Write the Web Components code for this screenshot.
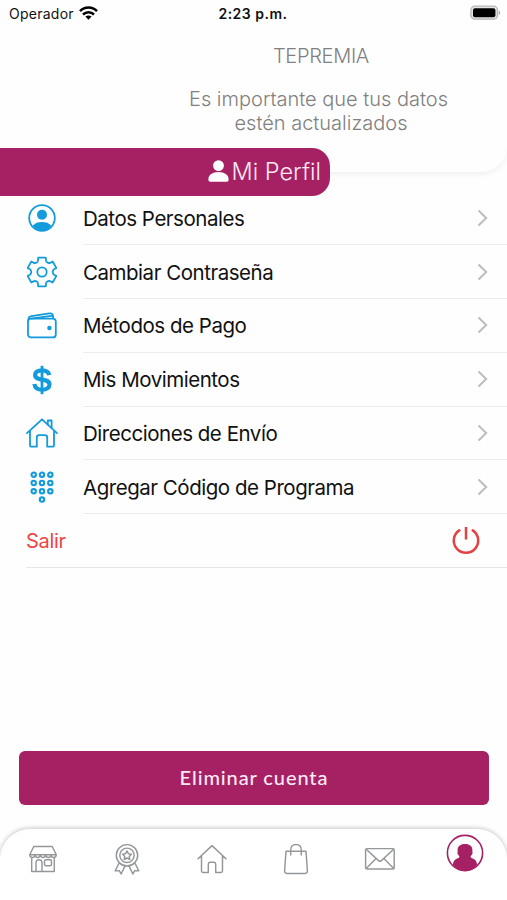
<!DOCTYPE html>
<html lang="es">
<head>
<meta charset="utf-8">
<meta name="viewport" content="width=device-width, initial-scale=1">
<title>Mi Perfil</title>
<style>
	html, body{
		margin:0;
		height:100%;
	}
	body{
		--brand: #a62163;
		--blue: #139bdc;
		background:#fefefe;
		color:#111;
		font-family: Inter, "Liberation Sans", sans-serif;
		overflow:hidden;
	}
</style>
</head>
<body>

<profile-page>
	<status-bar slot="status" carrier="Operador" time="2:23 p.m."></status-bar>
	<profile-header slot="header">
		<span slot="name">TEPREMIA</span>
		<span slot="line1">Es importante que tus datos</span>
		<span slot="line2">estén actualizados</span>
	</profile-header>
	<title-banner slot="banner">Mi Perfil</title-banner>

	<menu-row icon="user">Datos Personales</menu-row>
	<menu-row icon="gear">Cambiar Contraseña</menu-row>
	<menu-row icon="wallet">Métodos de Pago</menu-row>
	<menu-row icon="dollar">Mis Movimientos</menu-row>
	<menu-row icon="house">Direcciones de Envío</menu-row>
	<menu-row icon="keypad">Agregar Código de Programa</menu-row>
	<logout-row>Salir</logout-row>

	<action-button slot="action">Eliminar cuenta</action-button>
	<tab-bar slot="tabs"></tab-bar>
</profile-page>

<script>
const icons = {
	user: `<svg width="28" height="28" viewBox="0 0 28 28"><circle cx="14" cy="14" r="12.8" fill="none" stroke="currentColor" stroke-width="1.8"/><circle cx="14" cy="10.800" r="5" fill="currentColor"/><path d="M4.800 21.800C7 19 10 18 14 18s7 1 9.200 3.800C21 25.300 17.500 27 14 27s-7-1.700-9.200-5.200z" fill="currentColor"/></svg>`,
	gear: `<svg width="32" height="32" viewBox="0 0 32 32" fill="none" stroke="currentColor" stroke-width="1.8" stroke-linejoin="round"><path d="M12.200 1.700h7.600l.2 2.700q.2 1.600 1.600 2.300t3-.1l2-1.100 3.700 6.400-2.200 1.400q-1.400 1-1.400 2.700t1.400 2.700l2.200 1.400-3.700 6.400-2-1.100q-1.600-.8-3-.1t-1.600 2.300l-.2 2.700h-7.600l-.2-2.700q-.2-1.600-1.600-2.300t-3 .1l-2 1.100-3.700-6.400 2.200-1.400q1.400-1 1.400-2.700t-1.400-2.700l-2.200-1.400 3.700-6.400 2 1.100q1.600.8 3 .1T12 4.400z"/><circle cx="16" cy="16" r="4.700"/></svg>`,
	wallet: `<svg width="32" height="30" viewBox="0 0 32 30" fill="none" stroke="currentColor" stroke-width="1.8" stroke-linejoin="round"><rect x="2" y="7.600" width="27.800" height="18.800" rx="3"/><path d="M2.500 9.500c-.3-2.500.8-4 3-4.300L23.500 2.400c2.200-.3 3.300.6 3.500 2.600l.3 2.700M5 7.700l22.200-3"/><circle cx="23.400" cy="17" r="2.200" fill="currentColor" stroke="none"/></svg>`,
	dollar: `<svg width="22" height="30" viewBox="0 0 22 30" fill="none" stroke="currentColor"><path d="M18.200 10.200C17.600 6.700 15 5.300 11 5.300c-4.200 0-6.900 1.700-6.900 4.700 0 6.900 14.400 2.400 14.400 9.500 0 3.300-3 5.200-7.300 5.200-4.600 0-7.300-1.900-7.800-5.700" stroke-width="4.200"/><path d="M11 .8v28.400" stroke-width="2.800"/></svg>`,
	house: `<svg width="34" height="32" viewBox="0 0 34 32" fill="none" stroke="currentColor" stroke-width="1.800" stroke-linejoin="round" stroke-linecap="round"><path d="M2 16.200 17 2.300l15 13.900M5 14v14.400c0 .9.400 1.300 1.300 1.300h5.500V20.500c0-1.600.7-2.400 2.200-2.400h6c1.500 0 2.200.8 2.200 2.400v9.200h5.500c.9 0 1.300-.4 1.300-1.300V14"/><path d="M22.800 7.300V3.500h3.800v7.300"/></svg>`,
	keypad: `<svg width="24" height="32" viewBox="0 0 24 32" fill="none" stroke="currentColor" stroke-width="2.100"><circle cx="3.700" cy="3.700" r="2.200"/><circle cx="12" cy="3.700" r="2.200"/><circle cx="20.300" cy="3.700" r="2.200"/><circle cx="3.700" cy="12" r="2.200"/><circle cx="12" cy="12" r="2.200"/><circle cx="20.300" cy="12" r="2.200"/><circle cx="3.700" cy="20.300" r="2.200"/><circle cx="12" cy="20.300" r="2.200"/><circle cx="20.300" cy="20.300" r="2.200"/><circle cx="12" cy="28.600" r="2.200"/></svg>`,
	store: `<svg width="30" height="28" viewBox="0 0 30 28"><path d="M5.800 1.500h18.400l4.100 8.200H1.700zM1.700 9.700c.2 3.600 5.200 3.600 5.300.3.300 3.300 5 3.300 5.300 0 .3 3.300 5.100 3.300 5.400 0 .3 3.300 5 3.300 5.300 0 .1 3.300 5.100 3.300 5.300-.3M3.700 12.800v13.700h22.600V12.800M8 26.500V18c0-2.200 1-3.200 3-3.200s3 1 3 3.200v8.500"/><rect x="16.500" y="14.700" width="7" height="6" rx="1.500"/></svg>`,
	medal: `<svg width="26" height="32" viewBox="0 0 26 32"><circle cx="13" cy="12.300" r="10.700"/><circle cx="13" cy="12.300" r="7.200"/><path d="m13 7.900 1.400 2.900 3.100.4-2.300 2.200.6 3.100-2.800-1.500-2.800 1.500.6-3.100-2.300-2.200 3.100-.4zM5 20.200l-3.800 7.700 4.100-.2 1.800 3.300 4-8.100M21 20.200l3.800 7.700-4.100-.2-1.800 3.300-4-8.100"/></svg>`,
	home: `<svg width="30" height="30" viewBox="0 0 30 30"><path d="M1 14.800 15 1.600l14 13.200M4.500 11.700V27c0 1 .4 1.400 1.400 1.400h5.400v-8c0-1.500.6-2.200 2-2.200h3.400c1.400 0 2 .7 2 2.200v8h5.400c1 0 1.400-.4 1.400-1.400V11.700"/></svg>`,
	bag: `<svg width="26" height="32" viewBox="0 0 26 32"><path d="M3 8.300h20l1.400 19.400c.1 1.800-1 2.800-2.700 2.800H4.300c-1.700 0-2.800-1-2.700-2.800zM7.700 12V7.300c0-3.700 2.300-5.800 5.300-5.800s5.300 2.100 5.300 5.800V12"/></svg>`,
	mail: `<svg width="32" height="24" viewBox="0 0 32 24"><rect x="1.600" y="1.600" width="28.600" height="20.400" rx="1.500"/><path d="m2.200 2.300 12.300 11.300c1 .9 1.900.9 2.900 0L29.700 2.300M2.200 21.400 12 11.500M29.700 21.400l-9.800-9.900"/></svg>`,
	profile: `<svg width="38" height="38" viewBox="0 0 38 38"><circle cx="19" cy="19" r="17.600" fill="none" stroke="currentColor" stroke-width="1.600"/><path d="M19 9.900c-4.900 0-7.400 2.300-7.400 6.200 0 1 .1 1.500-.1 2.300-.3 1.400.6 2.200 1.500 3.300.7 1 .5 1.900-.6 2.200-3.400.9-5.200 3-5.600 7C10 34.700 14.300 37 19 37s9-2.300 12.200-6.100c-.4-4-2.200-6.100-5.600-7-1.100-.3-1.300-1.200-.6-2.200.9-1.100 1.800-1.900 1.500-3.300-.2-.8-.1-1.300-.1-2.300 0-3.900-2.500-6.200-7.400-6.200z" fill="currentColor"/></svg>`
};

class ProfilePage extends HTMLElement {
	constructor() {
		super();
		this.attachShadow({ mode: 'open' }).innerHTML = `
		<style>
			:host{
				display:flex;
				flex-direction:column;
				height:900px;
				overflow:hidden;
			}
			.rows{
				flex:1;
				margin-top:-4.500px;
			}
		</style>
		<slot name="status"></slot>
		<slot name="header"></slot>
		<slot name="banner"></slot>
		<main class="rows"><slot></slot></main>
		<slot name="action"></slot>
		<slot name="tabs"></slot>`;
	}
}
customElements.define('profile-page', ProfilePage);

class StatusBar extends HTMLElement {
	connectedCallback() {
		this.attachShadow({ mode: 'open' }).innerHTML = `
		<style>
			:host{
				display:grid;
				grid-template-columns:1fr auto 1fr;
				align-items:center;
				height:27px;
				margin-bottom:1px;
				padding:0 6px 0 9px;
				font-size:14px;
				box-sizing:border-box;
			}
			.left{
				display:flex;
				align-items:center;
				gap:5px;
				letter-spacing:.25px;
			}
			.left svg{
				margin-top:-2px;
			}
			b{
				margin-right:4px;
				font-weight:600;
				letter-spacing:.5px;
			}
			.battery{
				justify-self:end;
				margin-top:-1px;
			}
			svg{ display:block; }
		</style>
		<div class="left"><span>${this.getAttribute('carrier')}</span>
			<svg width="19" height="14" viewBox="0 0 19 14" fill="none" stroke="#000" stroke-width="2.500"><path d="M1 5.200c4.800-4.900 12.200-4.900 17 0M4 8.500c3.200-3.100 7.800-3.100 11 0"/><path d="M6.400 10.600c1.800-1.600 4.400-1.600 6.200 0L9.500 13.800z" fill="#000" stroke="none"/></svg>
		</div>
		<b>${this.getAttribute('time')}</b>
		<svg class="battery" width="31" height="16" viewBox="0 0 31 16"><rect x=".9" y="1.200" width="26.600" height="13" rx="4" fill="#e4e4e4" stroke="#b5b5b5" stroke-width="1.300"/><rect x="3" y="3.200" width="22.400" height="9" rx="2" fill="#000"/><path d="M28.800 5.500c1.900.8 1.900 3.700 0 4.500z" fill="#aaa"/></svg>`;
	}
}
customElements.define('status-bar', StatusBar);

class ProfileHeader extends HTMLElement {
	constructor() {
		super();
		this.attachShadow({ mode: 'open' }).innerHTML = `
		<style>
			:host{
				display:flex;
				flex-direction:column;
				align-items:center;
				box-sizing:border-box;
				height:144px;
				flex:none;
				padding:16px 0 0 130px;
				border-radius:0 0 26px 0;
				box-shadow:0 3px 5px rgba(0,0,0,.05);
				color:#808080;
				font-size:20px;
				font-weight:300;
				line-height:24.500px;
				clip-path:inset(0 0 -12px 0);
			}
			.name{
				padding-left:5px;
				margin-bottom:18px;
				letter-spacing:-.3px;
			}
			.text{
				text-align:center;
			}
			.text slot{
				display:block;
			}
			.l2{ padding-left:5px; }
		</style>
		<div class="name"><slot name="name"></slot></div>
		<div class="text"><slot name="line1"></slot><slot class="l2" name="line2"></slot></div>`;
	}
}
customElements.define('profile-header', ProfileHeader);

class TitleBanner extends HTMLElement {
	constructor() {
		super();
		this.attachShadow({ mode: 'open' }).innerHTML = `
		<style>
			:host{
				display:flex;
				align-items:center;
				justify-content:flex-end;
				gap:3px;
				box-sizing:border-box;
				flex:none;
				width:330px;
				height:48px;
				margin-top:-24px;
				padding:0 9px 2px 0;
				border-radius:0 18px 18px 0;
				background:var(--brand);
				color:#fde9f5;
				font-size:23.500px;
				font-weight:300;
				z-index:1;
			}
		</style>
		<svg width="21" height="22" viewBox="0 0 21 22" fill="#fff"><circle cx="10.500" cy="5.600" r="5.400"/><path d="M.4 19.500c0-4.700 4.200-7.500 10.100-7.500s10.100 2.800 10.100 7.500c0 1.500-.6 2.200-2 2.200H2.400c-1.400 0-2-.7-2-2.200z"/></svg>
		<span><slot></slot></span>`;
	}
}
customElements.define('title-banner', TitleBanner);

class MenuRow extends HTMLElement {
	connectedCallback() {
		this.attachShadow({ mode: 'open' }).innerHTML = `
		<style>
			:host{
				display:grid;
				grid-template-columns:83px 1fr;
				height:53.750px;
				font-size:20.500px;
				letter-spacing:-.47px;
			}
			.icon{
				display:grid;
				place-items:center;
				color:var(--blue);
			}
			.label{
				display:flex;
				align-items:center;
				justify-content:space-between;
				padding-right:19px;
				border-bottom:1.500px solid #ededee;
			}
			.label span{
				padding-top:1px;
			}
			svg{ display:block; }
		</style>
		<div class="icon">${icons[this.getAttribute('icon')]}</div>
		<div class="label">
			<span><slot></slot></span>
			<svg width="11" height="18" viewBox="0 0 11 18" fill="none" stroke="#bdbdbd" stroke-width="2"><path d="m1.500 1.500 7.700 7.500-7.700 7.500"/></svg>
		</div>`;
	}
}
customElements.define('menu-row', MenuRow);

class LogoutRow extends HTMLElement {
	constructor() {
		super();
		this.attachShadow({ mode: 'open' }).innerHTML = `
		<style>
			:host{
				display:flex;
				align-items:center;
				justify-content:space-between;
				box-sizing:border-box;
				height:53.750px;
				margin-left:26px;
				padding-right:26px;
				border-bottom:1px solid #e6e6e7;
				color:#ee4545;
				font-size:20px;
				letter-spacing:-.3px;
			}
			span{
				padding-top:1px;
			}
		</style>
		<span><slot></slot></span>
		<svg width="30" height="30" viewBox="0 0 30 30" fill="none" stroke="#e24242" stroke-width="2.500" stroke-linecap="round"><path d="M8.300 5.400a12.200 12.200 0 1 0 13.400 0"/><path d="M15 2v12.500" stroke-linecap="butt"/></svg>`;
	}
}
customElements.define('logout-row', LogoutRow);

class ActionButton extends HTMLElement {
	constructor() {
		super();
		this.attachShadow({ mode: 'open' }).innerHTML = `
		<style>
			:host{
				display:block;
				flex:none;
				margin:0 18px 24px 19px;
			}
			button{
				display:block;
				width:100%;
				height:54px;
				padding:0 0 2px;
				border:0;
				border-radius:6px;
				background:var(--brand);
				color:#fdeaf5;
				font:500 20px Lato, "Open Sans", sans-serif;
				letter-spacing:.9px;
			}
		</style>
		<button><slot></slot></button>`;
	}
}
customElements.define('action-button', ActionButton);

class TabBar extends HTMLElement {
	constructor() {
		super();
		const tabs = ['store', 'medal', 'home', 'bag', 'mail', 'profile'];
		this.attachShadow({ mode: 'open' }).innerHTML = `
		<style>
			:host{
				display:grid;
				grid-template-columns:repeat(6, 1fr);
				flex:none;
				box-sizing:border-box;
				height:71.500px;
				padding:0 0 10.500px 1px;
				border-radius:30px 30px 0 0;
				background:#fff;
				box-shadow:0 -1px 4px rgba(0,0,0,.22);
			}
			a{
				display:grid;
				place-items:center;
				color:#94979a;
			}
			a svg{
				fill:none;
				stroke:currentColor;
				stroke-width:1.450;
				stroke-linejoin:round;
				stroke-linecap:round;
			}
			.profile{
				color:var(--brand);
				padding-bottom:13px;
			}
			.profile svg{ stroke:none; }
		</style>
		${tabs.map(t => `<a class="${t}">${icons[t]}</a>`).join('')}`;
	}
}
customElements.define('tab-bar', TabBar);
</script>
</body>
</html>
